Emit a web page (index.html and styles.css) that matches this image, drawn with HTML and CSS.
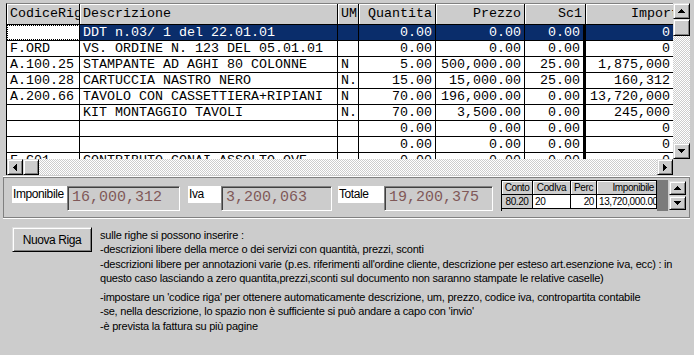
FILE: index.html
```html
<!DOCTYPE html>
<html lang="it">
<head>
    <meta charset="UTF-8">
    <title>Righe documento</title>
    <link rel="stylesheet" href="styles.css">
</head>
<body>
<div class="app">

    <!-- griglia righe -->
    <div class="table-area">
        <div class="viewport">
            <div class="row head">
                <div class="c">CodiceRiga</div>
                <div class="c">Descrizione</div>
                <div class="c">UM</div>
                <div class="c r">Quantita</div>
                <div class="c r">Prezzo</div>
                <div class="c r">Sc1</div>
                <div class="c r last"><span class="overhang">Importo</span></div>
            </div>
            <div class="row body sel">
                <div class="c focus"></div>
                <div class="c">DDT n.03/ 1 del 22.01.01</div>
                <div class="c"></div>
                <div class="c r">0.00</div>
                <div class="c r">0.00</div>
                <div class="c r sc">0.00</div>
                <div class="c r last">0</div>
            </div>
            <div class="row body">
                <div class="c">F.ORD</div>
                <div class="c">VS. ORDINE N. 123 DEL 05.01.01</div>
                <div class="c"></div>
                <div class="c r">0.00</div>
                <div class="c r">0.00</div>
                <div class="c r sc">0.00</div>
                <div class="c r last">0</div>
            </div>
            <div class="row body">
                <div class="c">A.100.25</div>
                <div class="c">STAMPANTE AD AGHI 80 COLONNE</div>
                <div class="c">N</div>
                <div class="c r">5.00</div>
                <div class="c r">500,000.00</div>
                <div class="c r sc">25.00</div>
                <div class="c r last">1,875,000</div>
            </div>
            <div class="row body">
                <div class="c">A.100.28</div>
                <div class="c">CARTUCCIA NASTRO NERO</div>
                <div class="c">N.</div>
                <div class="c r">15.00</div>
                <div class="c r">15,000.00</div>
                <div class="c r sc">25.00</div>
                <div class="c r last">160,312</div>
            </div>
            <div class="row body">
                <div class="c">A.200.66</div>
                <div class="c">TAVOLO CON CASSETTIERA+RIPIANI</div>
                <div class="c">N</div>
                <div class="c r">70.00</div>
                <div class="c r">196,000.00</div>
                <div class="c r sc">0.00</div>
                <div class="c r last">13,720,000</div>
            </div>
            <div class="row body">
                <div class="c"></div>
                <div class="c">KIT MONTAGGIO TAVOLI</div>
                <div class="c">N.</div>
                <div class="c r">70.00</div>
                <div class="c r">3,500.00</div>
                <div class="c r sc">0.00</div>
                <div class="c r last">245,000</div>
            </div>
            <div class="row body">
                <div class="c"></div>
                <div class="c"></div>
                <div class="c"></div>
                <div class="c r">0.00</div>
                <div class="c r">0.00</div>
                <div class="c r sc">0.00</div>
                <div class="c r last">0</div>
            </div>
            <div class="row body">
                <div class="c"></div>
                <div class="c"></div>
                <div class="c"></div>
                <div class="c r">0.00</div>
                <div class="c r">0.00</div>
                <div class="c r sc">0.00</div>
                <div class="c r last">0</div>
            </div>
            <div class="row body">
                <div class="c">F.G01</div>
                <div class="c">CONTRIBUTO CONAI ASSOLTO OVE</div>
                <div class="c"></div>
                <div class="c r">0.00</div>
                <div class="c r">0.00</div>
                <div class="c r sc">0.00</div>
                <div class="c r last">0</div>
            </div>
        </div>

        <div class="vscroll">
            <div class="btn3d sbtn"><svg width="7" height="4" viewBox="0 0 7 4"><polygon points="3.5,0 7,4 0,4"/></svg></div>
            <div class="btn3d thumb-v"></div>
            <div class="track"></div>
            <div class="btn3d sbtn"><svg width="7" height="4" viewBox="0 0 7 4"><polygon points="0,0 7,0 3.5,4"/></svg></div>
        </div>

        <div class="hscroll">
            <div class="btn3d hbtn"><svg width="4" height="7" viewBox="0 0 4 7"><polygon points="4,0 4,7 0,3.5"/></svg></div>
            <div class="btn3d thumb-h"></div>
            <div class="track"></div>
            <div class="btn3d hbtn"><svg width="4" height="7" viewBox="0 0 4 7"><polygon points="0,0 4,3.5 0,7"/></svg></div>
        </div>

        <div class="corner"></div>
    </div>

    <!-- totali documento -->
    <div class="totals">
        <span class="lbl lbl-imp">Imponibile</span>
        <span class="val val-imp">16,000,312</span>
        <span class="lbl lbl-iva">Iva</span>
        <span class="val val-iva">3,200,063</span>
        <span class="lbl lbl-tot">Totale</span>
        <span class="val val-tot">19,200,375</span>

        <div class="mini">
            <div class="mini-table">
                <div class="m mh ctr">Conto</div>
                <div class="m mh ctr">CodIva</div>
                <div class="m mh ctr">Perc</div>
                <div class="m mh r">Imponibile</div>
                <div class="m fixed ctr">80.20</div>
                <div class="m cell">20</div>
                <div class="m cell r">20</div>
                <div class="m cell r">13,720,000.00</div>
            </div>
            <div class="mini-gap"></div>
            <div class="mini-scroll">
                <div class="btn3d mbtn"><svg width="7" height="4" viewBox="0 0 7 4"><polygon points="3.5,0 7,4 0,4"/></svg></div>
                <div class="btn3d mbtn"><svg width="7" height="4" viewBox="0 0 7 4"><polygon points="0,0 7,0 3.5,4"/></svg></div>
            </div>
        </div>
    </div>

    <!-- pulsante e note -->
    <div class="lower">
        <button class="btn3d new-row">Nuova Riga</button>
        <div class="help">
            <p>sulle righe si possono inserire :</p>
            <p>-descrizioni libere della merce o dei servizi con quantità, prezzi, sconti</p>
            <p class="gap1">-descrizioni libere per annotazioni varie (p.es. riferimenti all'ordine cliente, descrizione per esteso art.esenzione iva, ecc) : in<br>questo caso lasciando a zero quantita,prezzi,sconti sul documento non saranno stampate le relative caselle)</p>
            <p class="gap5">-impostare un 'codice riga' per ottenere automaticamente descrizione, um, prezzo, codice iva, contropartita contabile</p>
            <p>-se, nella descrizione, lo spazio non è sufficiente si può andare a capo con 'invio'</p>
            <p class="gap1">-è prevista la fattura su più pagine</p>
        </div>
    </div>

</div>
</body>
</html>
```

FILE: styles.css
```css
* {
    margin: 0;
    padding: 0;
    box-sizing: border-box;
}

body {
    font-family: 'Liberation Sans', Arial, sans-serif;
    background-color: #cccccc;
}

.app {
    width: 694px;
    height: 355px;
    overflow: hidden;
}

/* ---- griglia ---- */

.table-area {
    display: grid;
    grid-template-columns: 667px 17px;
    grid-template-rows: 156px 16px;
    margin: 3px 0 0 6px;
}

.viewport {
    border-left: 1px solid #000;
    border-top: 1px solid #808080;
    overflow: hidden;
    background-color: #ffffff;
    font-family: 'Liberation Mono', 'Courier New', monospace;
    font-size: 13.33px;
}

.row {
    display: grid;
    grid-template-columns: 73px 258px 21px 77px 89px 61px 87px;
    height: 16px;
    border-bottom: 1px solid #000;
}

.row.head {
    height: 21px;
    background-color: #cccccc;
}

.c {
    border-right: 1px solid #000;
    padding: 0 3px;
    white-space: nowrap;
    overflow: hidden;
    line-height: 15px;
}

.head .c {
    line-height: 20px;
    box-shadow: inset 1px 1px #fff;
}

.r {
    text-align: right;
}

.body .sc {
    border-right: 3px solid #000;
}

.c.last {
    border-right: 0;
}

.overhang {
    display: inline-block;
    margin-right: -17px;
}

.sel .c {
    background-color: #0a2d6b;
    color: #ffffff;
}

.sel .c.focus {
    background-color: #ffffff;
    outline: 1px dotted #000;
    outline-offset: -1px;
}

/* ---- barre di scorrimento ---- */

.btn3d {
    background-color: #cccccc;
    border: 1px solid;
    border-color: #dcdcdc #000 #000 #dcdcdc;
    box-shadow: inset 1px 1px #fff, inset -1px -1px #808080;
    display: flex;
    align-items: center;
    justify-content: center;
}

.btn3d svg {
    display: block;
    fill: #000;
    shape-rendering: crispEdges;
}

.track {
    flex: 1;
    background-image: conic-gradient(#fff 25%, #cccccc 0 50%, #fff 0 75%, #cccccc 0);
    background-size: 2px 2px;
}

.vscroll {
    display: flex;
    flex-direction: column;
}

.sbtn {
    height: 16px;
}

.thumb-v {
    height: 17px;
}

.hscroll {
    display: flex;
    border-left: 1px solid #000;
}

.hbtn,
.thumb-h {
    width: 16px;
}

.corner {
    background-color: #cccccc;
}

/* ---- totali ---- */

.totals {
    display: flex;
    align-items: flex-start;
    width: 687px;
    height: 41px;
    margin: 2px 0 0 3px;
    padding-left: 8px;
    border: 1px solid #808080;
    box-shadow: 0 -1px #fff, 0 1px #fff;
}

.lbl {
    margin-top: 8px;
    height: 17px;
    line-height: 17px;
    padding-left: 1px;
    background-color: #ffffff;
    font-size: 12px;
    letter-spacing: -0.4px;
}

.lbl-imp { width: 55px; }
.lbl-iva { width: 33px; margin-left: 8px; }
.lbl-tot { width: 46px; margin-left: 6px; }

.val {
    margin-top: 8px;
    height: 25px;
    line-height: 22px;
    padding-left: 4px;
    border: 1px solid;
    border-color: #808080 #fff #fff #808080;
    box-shadow: inset 1px 1px #404040;
    font-family: 'Liberation Mono', 'Courier New', monospace;
    font-size: 15px;
    color: #805858;
}

.val-imp { width: 113px; }
.val-iva { width: 111px; }
.val-tot { width: 109px; }

.mini {
    display: flex;
    margin: 2px 0 0 8px;
}

.mini-table {
    display: grid;
    grid-template-columns: 31px 38px 26px 60px;
    grid-template-rows: 14px 14px;
    align-content: start;
    width: 156px;
    height: 31px;
    border-left: 1px solid #000;
    border-top: 1px solid #000;
    font-size: 10px;
    letter-spacing: -0.4px;
}

.m {
    border-right: 1px solid #000;
    border-bottom: 1px solid #000;
    padding: 0 2px;
    line-height: 13px;
    white-space: nowrap;
    overflow: hidden;
}

.mh {
    box-shadow: inset 1px 1px #fff;
}

.ctr {
    text-align: center;
}

.fixed {
    background-color: #cccccc;
}

.cell {
    background-color: #ffffff;
}

.mini-gap {
    width: 11px;
    height: 31px;
    background-color: #7b7b7b;
}

.mini-scroll {
    display: flex;
    flex-direction: column;
    gap: 1px;
    margin-left: 1px;
    padding-top: 1px;
}

.mbtn {
    width: 17px;
    height: 14px;
}

/* ---- parte bassa ---- */

.lower {
    display: flex;
    gap: 8px;
    padding: 9px 0 0 12px;
}

.new-row {
    flex: none;
    width: 80px;
    height: 25px;
    font-family: 'Liberation Sans', Arial, sans-serif;
    font-size: 12px;
    letter-spacing: -0.4px;
    color: #000;
}

.help {
    margin-top: 1px;
    font-size: 11px;
    letter-spacing: -0.22px;
    line-height: 14px;
    white-space: nowrap;
}

.help .gap1 { margin-top: 1px; }
.help .gap5 { margin-top: 5px; }
```
